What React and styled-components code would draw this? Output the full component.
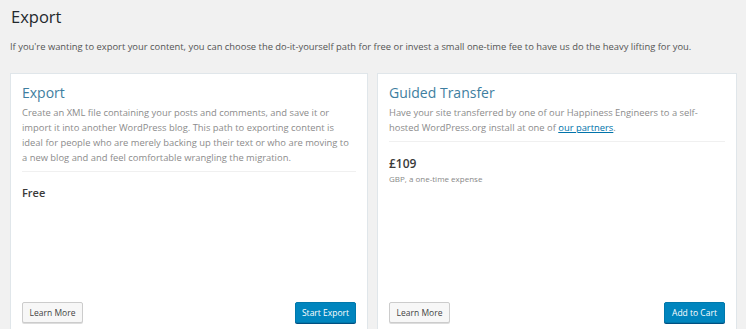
import styled, { createGlobalStyle } from "styled-components";

const GlobalStyle = createGlobalStyle`
  html, body {
    margin: 0;
    padding: 0;
    background: #f1f1f1;
    overflow: hidden;
  }
  body {
    font-family: "Open Sans", "Noto Sans", sans-serif;
    color: #2e4453;
  }
`;

const Page = styled.div`
  padding: 6px 10px 0 10px;
`;

const PageTitle = styled.h1`
  margin: 0 0 0 1px;
  font-size: 16.5px;
  font-weight: 400;
  line-height: 22px;
  color: #23282d;
`;

const Intro = styled.p`
  margin: 12px 0 0 0;
  font-size: 9.4px;
  line-height: 14px;
  color: #555;
`;

const Cards = styled.div`
  display: grid;
  grid-template-columns: 356px 358px;
  gap: 11px;
  margin: 20px 0 0 1px;
`;

const Card = styled.section`
  display: flex;
  flex-direction: column;
  min-height: 260px;
  box-sizing: border-box;
  padding: 9px 11px 11px 11px;
  background: #fff;
  box-shadow: 0 0 0 1px rgba(200, 215, 225, 0.4);
`;

const CardTitle = styled.h2`
  margin: 0;
  font-size: 14px;
  font-weight: 400;
  line-height: 20px;
  color: #3e7ea0;
`;

const Description = styled.p`
  margin: 2px 0 0 0;
  font-size: 9.4px;
  line-height: 15px;
  color: #8c8c8c;
`;

const PartnerLink = styled.a`
  color: #0073aa;
  text-decoration: underline;
`;

const Divider = styled.hr`
  margin: 6px 0 0 0;
  border: 0;
  border-top: 1px solid #f0f0f0;
`;

const Price = styled.div`
  margin-top: ${(p) => p.$top || 14}px;
  font-size: ${(p) => p.$size || 11}px;
  font-weight: 600;
  line-height: 16px;
  color: #3a3a3a;
`;

const PriceNote = styled.div`
  margin-top: 1px;
  font-size: 8px;
  line-height: 12px;
  color: #888;
`;

const Footer = styled.div`
  display: flex;
  justify-content: space-between;
  margin-top: auto;
`;

const Button = styled.button`
  height: 21px;
  width: 61px;
  padding: 0;
  box-sizing: border-box;
  font-family: "Open Sans", "Noto Sans", sans-serif;
  font-size: 8.5px;
  border-radius: 2px;
  cursor: pointer;
  color: ${(p) => (p.$primary ? "#fff" : "#444")};
  background: ${(p) => (p.$primary ? "#0085be" : "#f7f7f7")};
  border: 1px solid ${(p) => (p.$primary ? "#0078ab" : "#ccc")};
  box-shadow: ${(p) =>
    p.$primary ? "0 1px 0 #005082" : "0 1px 0 #ddd"};
`;

export default function App() {
  return (
    <>
      <GlobalStyle />
      <Page>
        <PageTitle>Export</PageTitle>
        <Intro>
          If you're wanting to export your content, you can choose the
          do-it-yourself path for free or invest a small one-time fee to have us
          do the heavy lifting for you.
        </Intro>
        <Cards>
          <Card>
            <CardTitle>Export</CardTitle>
            <Description>
              Create an XML file containing your posts and comments, and save it
              or import it into another WordPress blog. This path to exporting
              content is ideal for people who are merely backing up their text or
              who are moving to a new blog and and feel comfortable wrangling the
              migration.
            </Description>
            <Divider />
            <Price $top={13}>Free</Price>
            <Footer>
              <Button>Learn More</Button>
              <Button $primary>Start Export</Button>
            </Footer>
          </Card>
          <Card>
            <CardTitle>Guided Transfer</CardTitle>
            <Description>
              Have your site transferred by one of our Happiness Engineers to a
              self-hosted WordPress.org install at one of{" "}
              <PartnerLink href="#">our partners</PartnerLink>.
            </Description>
            <Divider />
            <Price $top={14} $size={12}>£109</Price>
            <PriceNote>GBP, a one-time expense</PriceNote>
            <Footer>
              <Button>Learn More</Button>
              <Button $primary>Add to Cart</Button>
            </Footer>
          </Card>
        </Cards>
      </Page>
    </>
  );
}
